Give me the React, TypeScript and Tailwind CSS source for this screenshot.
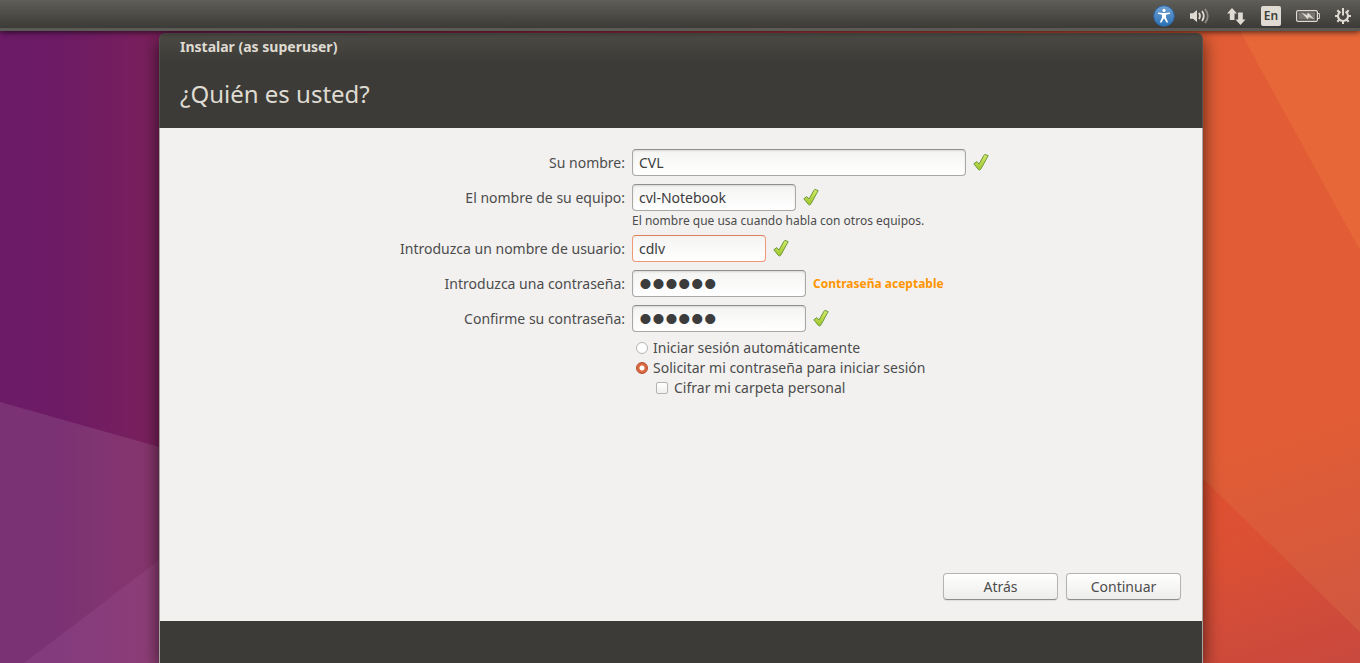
import type { ReactNode } from 'react'

// Instalador: paso "¿Quién es usted?", con la barra superior del escritorio.

const GRID = 'grid grid-cols-[465fr_570fr] gap-x-[7px]'
const INPUT =
  'h-[27px] rounded-[4px] border border-[#a9a8a5] border-t-[#8f8e8b] bg-linear-to-b from-[#f4f4f3] to-white px-1.5 text-[#3c3c3c] shadow-[inset_0_1px_2px_rgba(0,0,0,0.12)] outline-none'
const PASSWORD = `${INPUT} w-[174px] font-["Liberation_Sans"] text-[37px] leading-6`
const RADIO =
  'h-3 w-3 appearance-none rounded-full border border-[#b5b4b1] bg-white checked:border-[#b04a28] checked:bg-[radial-gradient(circle,#fff_0_2px,#dc6a41_3px)]'
const BUTTON =
  'h-[27px] w-[115px] rounded-[4px] border border-[#b4b3b0] border-b-[#8e8d8a] bg-linear-to-b from-white to-[#ededeb] shadow-[0_1px_1px_rgba(0,0,0,0.08)]'

function Wallpaper() {
  return (
    <svg
      className="absolute inset-0 h-full w-full"
      viewBox="0 0 1360 663"
      preserveAspectRatio="none"
      aria-hidden="true"
    >
      <defs>
        <linearGradient id="purple" gradientUnits="userSpaceOnUse" x1="0" y1="0" x2="1200" y2="0">
          <stop offset="0" stopColor="#6c1b66" />
          <stop offset="0.05" stopColor="#6d1b65" />
          <stop offset="0.14" stopColor="#7c215b" />
          <stop offset="0.5" stopColor="#a5304a" />
          <stop offset="1" stopColor="#e25d35" />
        </linearGradient>
        <linearGradient id="ember" gradientUnits="userSpaceOnUse" x1="1240" y1="470" x2="1310" y2="680">
          <stop offset="0" stopColor="#e05031" />
          <stop offset="0.3" stopColor="#dc5033" />
          <stop offset="1" stopColor="#c8483e" />
        </linearGradient>
        <linearGradient id="orange" gradientUnits="userSpaceOnUse" x1="1260" y1="440" x2="1330" y2="650">
          <stop offset="0" stopColor="#e25d35" />
          <stop offset="1" stopColor="#cf5741" />
        </linearGradient>
      </defs>
      <rect width="1360" height="663" fill="url(#purple)" />
      <path d="M0 402 170 450V663H0Z" fill="#fff" fillOpacity="0.1" />
      <path d="M24 663 170 552V663Z" fill="#e0a0f0" fillOpacity="0.08" />
      <rect x="1180" width="180" height="663" fill="url(#orange)" />
      <path d="M1234 20H1360V250Z" fill="#e86739" />
      <path d="M1190 466 1360 632V663H1190Z" fill="url(#ember)" />
    </svg>
  )
}

function Indicator({ label, children }: { label: string; children: ReactNode }) {
  return (
    <button type="button" aria-label={label} className="flex text-[#dfdbd2]">
      {children}
    </button>
  )
}

function TopPanel() {
  return (
    <header className="relative z-10 flex h-[31px] items-center justify-end gap-[15px] border-b-[3px] border-[#5b5a54] bg-linear-to-b from-[#5f5e58] to-[#3c3b37] pt-1 pr-[9px] shadow-[0_1px_6px_rgba(0,0,0,0.7)]">
      <Indicator label="Accesibilidad">
        <svg width="22" height="22" viewBox="0 0 22 22">
          <defs>
            <linearGradient id="access" x1="0" x2="0" y1="0" y2="1">
              <stop offset="0" stopColor="#6fa0d4" />
              <stop offset="1" stopColor="#2a72b4" />
            </linearGradient>
          </defs>
          <circle cx="11" cy="11" r="10.3" fill="url(#access)" stroke="#2c66a6" />
          <circle cx="11" cy="5.4" r="1.6" fill="#fff" />
          <path
            d="M5 7.4 9.4 8H12.6L17 7.4V8.8L13 9.8V12.4L15.2 17.6H13.6L11.2 13.4H10.8L8.4 17.6H6.8L9 12.4V9.8L5 8.8Z"
            fill="#fff"
          />
        </svg>
      </Indicator>
      <Indicator label="Sonido">
        <svg width="21" height="22" viewBox="0 0 21 22" fill="none" stroke="currentColor" strokeWidth="1.8">
          <path d="M0 8.2H3L7 5V17L3 13.8H0Z" fill="currentColor" stroke="none" />
          <path d="M9 8Q11 11 9 14" />
          <path d="M12 6Q15.6 11 12 16" />
          <path d="M15 4Q20.6 11 15 18" opacity="0.45" />
        </svg>
      </Indicator>
      <Indicator label="Red">
        <svg width="20" height="20" viewBox="0 0 20 20" fill="currentColor">
          <path d="M6 2 11 7.5H8.5V14H3.8V7.5H1Z" />
          <path d="M14.5 19 19.5 13.5H16.8V6.5H12.1V13.5H9.5Z" />
        </svg>
      </Indicator>
      <button
        type="button"
        className="h-5 w-5 rounded-[2px] bg-[#dfdbd2] text-center text-[12px] leading-5 font-semibold text-[#3c3b37]"
      >
        En
      </button>
      <Indicator label="Batería">
        <svg width="24" height="12" viewBox="0 0 24 12" fill="none" stroke="currentColor">
          <rect x="0.6" y="0.6" width="20.8" height="10.8" rx="1.5" strokeWidth="1.2" />
          <path d="M22 3.5H23.4V8.5H22" />
          <path d="M2.5 2.5H19V9.5H2.5Z" fill="currentColor" fillOpacity="0.3" stroke="none" />
          <path d="M5.5 2.4 11 5.2 12 2.4 18.5 9.6 12.8 7 11.8 9.6Z" fill="currentColor" stroke="none" />
        </svg>
      </Indicator>
      <Indicator label="Sesión">
        <svg width="16" height="16" viewBox="0 0 16 16" fill="none" stroke="currentColor" strokeWidth="2">
          <path d="M5.5 3.7A5 5 0 1 0 10.5 3.7" />
          <path d="M8 0V7.5" />
          <path d="M8 13V16M0 8H3M13 8H16M2.3 2.3 4.3 4.3M13.7 2.3 11.7 4.3M2.3 13.7 4.5 11.5M13.7 13.7 11.5 11.5" />
        </svg>
      </Indicator>
    </header>
  )
}

function Check() {
  return (
    <svg className="shrink-0" width="16" height="20" viewBox="0 0 16 20" aria-label="Correcto" role="img">
      <defs>
        <linearGradient id="tick" x1="0" x2="0" y1="0" y2="1">
          <stop offset="0" stopColor="#d5ea6a" />
          <stop offset="1" stopColor="#9fc52c" />
        </linearGradient>
      </defs>
      <path
        d="M0.8 10.8 3.8 8.6 6 11 11 2.2 11.8 1.4 15.2 2.6 8 15.8 6.6 17 5.4 16.4Z"
        fill="url(#tick)"
        stroke="#6b9a3c"
        strokeLinejoin="round"
      />
    </svg>
  )
}

type RowProps = { id: string; label: string; hint?: string; children: ReactNode }

function Row({ id, label, hint, children }: RowProps) {
  return (
    <div className={GRID}>
      <label htmlFor={id} className="text-right leading-[27px]">
        {label}
      </label>
      <div>
        <div className="flex items-center gap-[7px]">{children}</div>
        {hint && <p className="mt-1 text-[12px] leading-3">{hint}</p>}
      </div>
    </div>
  )
}

export default function App() {
  return (
    <div className='relative flex min-h-screen flex-col overflow-hidden font-["Noto_Sans",sans-serif] text-[14px] text-[#4c4c4c]'>
      <Wallpaper />
      <TopPanel />
      <main className="relative flex flex-1 flex-col pt-[2px] pr-[157px] pl-[159px]">
        <section className="flex flex-1 flex-col rounded-t-md shadow-[0_6px_18px_rgba(0,0,0,0.65)]">
          <div className="rounded-t-md border-x border-t border-[#53524d] bg-linear-to-b from-[#4b4a45] to-[#3c3b37] to-30% px-5 pb-[18px] text-[#dfdbd2]">
            <p className="text-[14px] leading-[26px] font-bold">Instalar (as superuser)</p>
            <h1 className="mt-[18px] text-[24px] leading-8">¿Quién es usted?</h1>
          </div>
          <form
            className="flex flex-1 flex-col border-x border-[#aaa5a3] bg-[#f2f1f0] pt-[21px] pb-[21px]"
            onSubmit={(e) => e.preventDefault()}
          >
            <div className="flex flex-col gap-2">
              <Row id="name" label="Su nombre:">
                <input id="name" className={`${INPUT} w-[334px]`} defaultValue="CVL" />
                <Check />
              </Row>
              <Row id="host" label="El nombre de su equipo:" hint="El nombre que usa cuando habla con otros equipos.">
                <input id="host" className={`${INPUT} w-[164px]`} defaultValue="cvl-Notebook" />
                <Check />
              </Row>
              <Row id="user" label="Introduzca un nombre de usuario:">
                <input
                  id="user"
                  className="h-[27px] w-[134px] rounded-[4px] border border-[#ee9876] border-t-[#dd7f5b] bg-linear-to-b from-[#f4f4f3] to-white px-1.5 text-[#3c3c3c] outline-none"
                  defaultValue="cdlv"
                />
                <Check />
              </Row>
              <Row id="password" label="Introduzca una contraseña:">
                <input id="password" type="password" className={PASSWORD} defaultValue="secret" />
                <span className="text-[12px] font-bold text-[#ff9500]">Contraseña aceptable</span>
              </Row>
              <Row id="confirm" label="Confirme su contraseña:">
                <input id="confirm" type="password" className={PASSWORD} defaultValue="secret" />
                <Check />
              </Row>
            </div>
            <div className={`${GRID} mt-[6px]`}>
              <div className="col-start-2 flex flex-col pl-1 leading-5">
                <label className="flex items-center gap-[5px]">
                  <input type="radio" name="login" className={RADIO} />
                  Iniciar sesión automáticamente
                </label>
                <label className="flex items-center gap-[5px]">
                  <input type="radio" name="login" defaultChecked className={RADIO} />
                  Solicitar mi contraseña para iniciar sesión
                </label>
                <label className="flex items-center gap-[6px] pl-5">
                  <input
                    type="checkbox"
                    className="h-3 w-3 appearance-none rounded-[2px] border border-[#b5b4b1] bg-linear-to-b from-white to-[#f0f0ee]"
                  />
                  Cifrar mi carpeta personal
                </label>
              </div>
            </div>
            <div className="mt-auto flex justify-end gap-2 pr-[21px]">
              <button type="button" className={BUTTON}>
                Atrás
              </button>
              <button type="submit" className={BUTTON}>
                Continuar
              </button>
            </div>
          </form>
          <footer className="h-[42px] border-x border-[#aaa5a3] bg-[#3c3b37]" />
        </section>
      </main>
    </div>
  )
}
